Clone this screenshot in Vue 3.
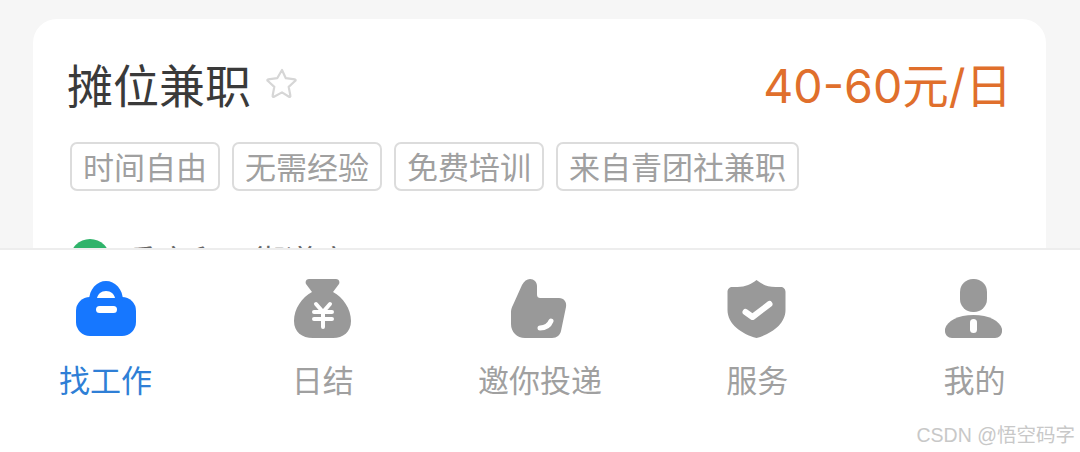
<script setup>
const tags = ['时间自由', '无需经验', '免费培训', '来自青团社兼职']
const tabs = [
  { label: '找工作', icon: 'bag', active: true },
  { label: '日结', icon: 'money' },
  { label: '邀你投递', icon: 'thumb' },
  { label: '服务', icon: 'shield' },
  { label: '我的', icon: 'user' }
]
</script>

<template>
  <div class="page">
    <div class="content">
      <div class="card">
        <div class="head">
          <div class="title-wrap">
            <h1 class="title">摊位兼职</h1>
            <svg class="star" viewBox="0 0 32 32" width="32" height="32">
              <path d="M16 3l3.800 8.200 9 1.100c.8.100 1.100 1 .5 1.500l-6.600 6.100 1.700 8.900c.2.800-.7 1.400-1.400 1L16 25.400l-8 4.400c-.7.400-1.600-.2-1.400-1l1.700-8.900-6.600-6.100c-.6-.5-.3-1.400.5-1.500l9-1.100z" fill="none" stroke="#d6d6d6" stroke-width="2.200" stroke-linejoin="round" />
            </svg>
          </div>
          <div class="salary">40-60元/日</div>
        </div>
        <div class="tags">
          <span v-for="t in tags" :key="t" class="tag">{{ t }}</span>
        </div>
        <div class="company">
          <span class="dot"></span>
          <span class="company-name">重庆和平街道店</span>
        </div>
      </div>
    </div>
    <nav class="tabbar">
      <div v-for="tab in tabs" :key="tab.label" class="tab" :class="{ active: tab.active }">
        <svg class="icon" viewBox="0 0 60 60" width="60" height="60">
          <template v-if="tab.icon === 'bag'">
            <rect x="0" y="18" width="60" height="39" rx="14" fill="#1677ff" />
            <path d="M13 22C13 10 21 2 30 2s17 8 17 20z" fill="#1677ff" />
            <path d="M21 19c1-4 4-7 9-7s8 3 9 7z" fill="#fff" />
            <rect x="20" y="27" width="21" height="7" rx="3.500" fill="#fff" />
          </template>
          <template v-else-if="tab.icon === 'money'">
            <path d="M16 0H43c3 0 4 3 3 5L40 13c10 5 18 17 18 29 0 11-8 17-18 17H20C9 59 1 53 1 42 1 30 9 18 19 13L13 5c-1-2 0-5 3-5z" fill="#999" />
            <path d="M23 25l7 8 7-8M21 33h18M21 40h18M30 33v15" fill="none" stroke="#fff" stroke-width="4" stroke-linecap="round" stroke-linejoin="round" />
          </template>
          <template v-else-if="tab.icon === 'thumb'">
            <path d="M12 6C14 2 17 0 20 0c4 0 7 3 7 7v8c0 3 1 4 4 4H49c5 0 8 4 7 9L51 52c-1 4-4 7-9 7H15C7 59 1 53 1 45V33c0-3 1-5 2-7z" fill="#999" />
            <path d="M30 49c5 0 9-2 11-7" fill="none" stroke="#fff" stroke-width="5" stroke-linecap="round" />
          </template>
          <template v-else-if="tab.icon === 'shield'">
            <path d="M29.500 1c5 4 11 7 19 7h5c3 0 5 2 5 5V31C58.500 45 44.500 55 29.500 59 14.500 55 .5 45 .5 31V13c0-3 2-5 5-5h5c8 0 14-3 19-7z" fill="#999" />
            <path d="M18.500 33l7 5 17-13" fill="none" stroke="#fff" stroke-width="6" stroke-linecap="round" stroke-linejoin="round" />
          </template>
          <template v-else>
            <rect x="16" y="0" width="27" height="33" rx="13" fill="#999" />
            <path d="M1 50C3 42 14 36 29.500 36S56 42 58 50v2c0 4-3 7-7 7H8c-4 0-7-3-7-7z" fill="#999" />
            <rect x="26" y="40" width="7" height="14" rx="3.500" fill="#fff" />
          </template>
        </svg>
        <span class="label">{{ tab.label }}</span>
      </div>
    </nav>
    <div class="mark">CSDN @悟空码字</div>
  </div>
</template>

<style>
html, body { margin: 0; padding: 0; background: #f6f6f6; }
</style>

<style scoped>
.page {
  position: relative;
  width: 1080px;
  height: 452px;
  overflow: hidden;
  display: flex;
  flex-direction: column;
  font-family: "Noto Sans CJK SC", "Noto Sans", sans-serif;
  background: #f6f6f6;
}
.content {
  height: 248px;
  flex-shrink: 0;
  overflow: hidden;
  padding: 19px 34px 0 33px;
  box-sizing: border-box;
}
.card {
  background: #fff;
  border-radius: 24px 24px 0 0;
  padding: 35px 34px 0 37px;
  height: 300px;
  box-sizing: border-box;
}
.head {
  display: flex;
  justify-content: space-between;
  align-items: center;
  height: 58px;
}
.title-wrap {
  display: flex;
  align-items: center;
  gap: 15px;
  margin-left: -3px;
}
.title {
  margin: 0;
  font-size: 46px;
  font-weight: 400;
  color: #3a3a3a;
  line-height: 58px;
}
.salary {
  font-family: Inter, "Noto Sans CJK SC", sans-serif;
  font-size: 46.500px;
  color: #e06f2c;
  line-height: 58px;
  margin-top: 6px;
}
.tags {
  display: flex;
  gap: 12px;
  margin-top: 30px;
}
.tag {
  border: 2px solid #dcdcdc;
  border-radius: 7px;
  padding: 0 11px;
  height: 49px;
  box-sizing: border-box;
  line-height: 43px;
  font-size: 31px;
  color: #a0a0a0;
}
.company {
  display: flex;
  align-items: center;
  gap: 15px;
  margin-top: 48px;
}
.dot {
  width: 40px;
  height: 40px;
  border-radius: 50%;
  background: #2fb36a;
}
.company-name {
  font-size: 32px;
  line-height: 40px;
  color: #666;
}
.tabbar {
  flex: 1;
  display: flex;
  background: #fff;
  border-top: 2px solid #ededed;
  padding-top: 29px;
  margin: 0 -3px;
}
.tab {
  flex: 1;
  display: flex;
  flex-direction: column;
  align-items: center;
}
.icon { display: block; }
.label {
  margin-top: 18px;
  font-size: 31px;
  line-height: 44px;
  color: #a0a0a0;
  white-space: nowrap;
}
.tab.active .label { color: #2f7fd6; }
.mark {
  position: absolute;
  right: 5px;
  bottom: 4px;
  font-family: "Liberation Sans", "Noto Sans CJK SC", sans-serif;
  font-size: 19.500px;
  color: #c8c8c8;
}
</style>
